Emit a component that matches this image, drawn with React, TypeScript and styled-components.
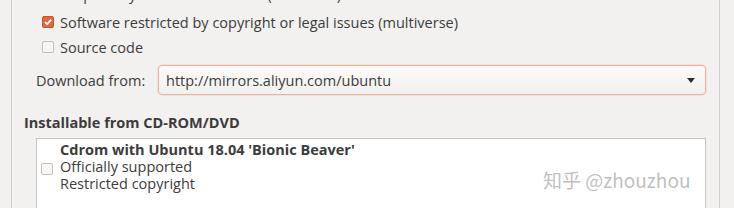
import React from 'react';
import styled, { createGlobalStyle } from 'styled-components';

const GlobalStyle = createGlobalStyle`
  html, body {
    margin: 0;
    padding: 0;
    background: #f2f1f0;
    overflow: hidden;
  }
  body {
    font-family: 'Open Sans', 'Noto Sans CJK SC', sans-serif;
    font-size: 14.5px;
    color: #3c3c3c;
  }
`;

const Page = styled.div`
  position: relative;
  width: 734px;
  height: 208px;
  overflow: hidden;
`;

const Frame = styled.div`
  margin: -13px 0 0 11px;
  width: 709px;
  height: 240px;
  border-left: 1px solid #cfcdc9;
  border-right: 1px solid #cfcdc9;
  box-sizing: border-box;
  padding: 0 13px 0 12px;
`;

const Options = styled.div`
  display: flex;
  flex-direction: column;
  gap: 5px;
  padding-left: 18px;
`;

const CheckRow = styled.label<{ $first?: boolean }>`
  display: flex;
  align-items: center;
  gap: 6px;
  height: 20px;
  white-space: nowrap;
  margin-top: ${p => (p.$first ? '-3px' : '0')};
  margin-bottom: ${p => (p.$first ? '3px' : '0')};
`;

const Box = styled.span<{ $checked?: boolean }>`
  width: 12px;
  height: 12px;
  flex: none;
  border-radius: 2px;
  box-sizing: border-box;
  border: 1px solid ${p => (p.$checked ? '#c5532b' : '#c2bfba')};
  background: ${p => (p.$checked ? '#dd6a3f' : '#f7f6f5')};
  display: flex;
  align-items: center;
  justify-content: center;
`;

const Check = () => (
  <svg width="10" height="10" viewBox="0 0 10 10">
    <path d="M2 5.2 L4.1 7.2 L8.2 2.6" stroke="#fff" strokeWidth="1.8" fill="none" />
  </svg>
);

const DownloadRow = styled.div`
  display: flex;
  align-items: center;
  gap: 12px;
  margin-top: 8px;
  padding-left: 12px;
`;

const FieldLabel = styled.span`
  width: 110px;
  flex: none;
  white-space: nowrap;
`;

const Combo = styled.div`
  flex: 1;
  height: 30px;
  box-sizing: border-box;
  border: 1px solid #e6b49c;
  border-radius: 4px;
  background: linear-gradient(#fbfaf9, #f3f1ef);
  box-shadow: 0 0 0 1px rgba(240, 200, 180, 0.35);
  display: flex;
  align-items: center;
  justify-content: space-between;
  padding: 0 8px 0 7px;
`;

const Arrow = styled.span`
  width: 0;
  height: 0;
  border-left: 4px solid transparent;
  border-right: 4px solid transparent;
  border-top: 5px solid #2d2d2d;
  margin-right: 2px;
`;

const SectionTitle = styled.div`
  font-weight: bold;
  margin-top: 17px;
  height: 20px;
  display: flex;
  align-items: center;
`;

const ListBox = styled.div`
  margin: 6px 0 0 12px;
  height: 90px;
  background: #fff;
  border: 1px solid #c9c6c2;
  display: flex;
  align-items: flex-start;
  padding: 2px 0 0 4px;
  gap: 7px;
`;

const ListCheck = styled.div`
  padding-top: 22px;
`;

const Lines = styled.div`
  display: flex;
  flex-direction: column;
  line-height: 17px;
`;

const Strong = styled.span`
  font-weight: bold;
`;

const Watermark = styled.div`
  position: absolute;
  left: 543px;
  top: 166px;
  font-family: 'Noto Sans CJK SC', 'Noto Sans', sans-serif;
  font-size: 19px;
  color: rgba(170, 170, 170, 0.75);
  text-shadow: 0 1px 0 rgba(255, 255, 255, 0.8);
`;

export default function App() {
  return (
    <Page>
      <GlobalStyle />
      <Frame>
        <Options>
          <CheckRow $first>
            <Box $checked>
              <Check />
            </Box>
            Proprietary drivers for devices (restricted)
          </CheckRow>
          <CheckRow>
            <Box $checked>
              <Check />
            </Box>
            Software restricted by copyright or legal issues (multiverse)
          </CheckRow>
          <CheckRow>
            <Box />
            Source code
          </CheckRow>
        </Options>
        <DownloadRow>
          <FieldLabel>Download from:</FieldLabel>
          <Combo>
            <span>http://mirrors.aliyun.com/ubuntu</span>
            <Arrow />
          </Combo>
        </DownloadRow>
        <SectionTitle>Installable from CD-ROM/DVD</SectionTitle>
        <ListBox>
          <ListCheck>
            <Box />
          </ListCheck>
          <Lines>
            <Strong>Cdrom with Ubuntu 18.04 'Bionic Beaver'</Strong>
            <span>Officially supported</span>
            <span>Restricted copyright</span>
          </Lines>
        </ListBox>
      </Frame>
      <Watermark>知乎 @zhouzhou</Watermark>
    </Page>
  );
}
